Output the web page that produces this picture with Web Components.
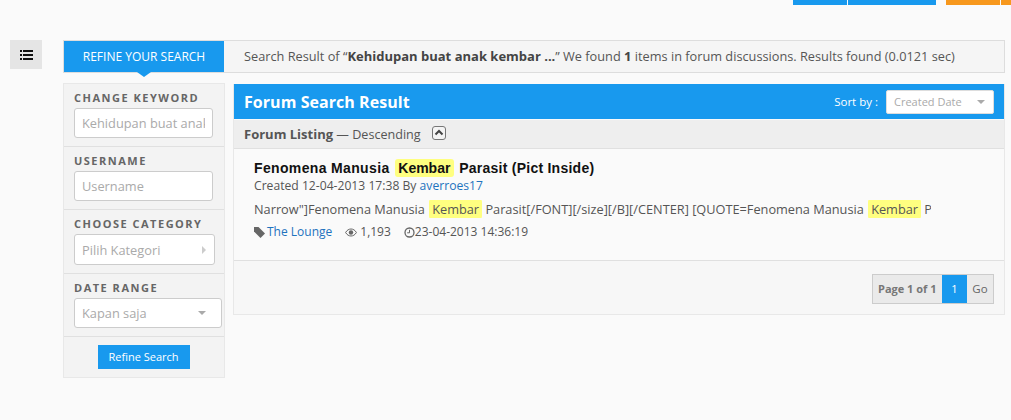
<!DOCTYPE html>
<html>
<head>
<meta charset="utf-8">
<style>
  html, body { margin: 0; padding: 0; }
  body { background: #fafafa; font-family: "Open Sans", sans-serif; color: #555; height: 420px; overflow: hidden; }
</style>
</head>
<body>
<top-tabs></top-tabs>
<search-page>
  <search-summary></search-summary>
  <filter-panel slot="side">
    <filter-field label="CHANGE KEYWORD" value="Kehidupan buat anak kembar" kind="text" w="139"></filter-field>
    <filter-field label="USERNAME" value="Username" kind="text" w="139"></filter-field>
    <filter-field label="CHOOSE CATEGORY" value="Pilih Kategori" kind="right" w="141" tall></filter-field>
    <filter-field label="DATE RANGE" value="Kapan saja" kind="down" w="148"></filter-field>
  </filter-panel>
  <result-panel slot="main">
    <result-item></result-item>
  </result-panel>
</search-page>

<script>
class TopTabs extends HTMLElement {
  constructor() {
    super();
    this.attachShadow({mode: "open"}).innerHTML = `
    <style>
      :host { display: flex; height: 5px; padding-left: 793px; }
      i { display: block; height: 5px; margin-right: 1px; background: #1899ee; }
      .o { background: #f7981d; }
    </style>
    <i style="width:54px"></i><i style="width:88px;margin-right:10px"></i><i class="o" style="width:54px"></i><i class="o" style="width:10px;margin:0"></i>`;
  }
}
customElements.define("top-tabs", TopTabs);

class SearchPage extends HTMLElement {
  constructor() {
    super();
    this.attachShadow({mode: "open"}).innerHTML = `
    <style>
      :host { display: flex; padding: 35px 6px 0 10px; }
      .toggle { width: 32px; height: 29px; background: #e5e5e5; display: flex; align-items: center; justify-content: center; margin-right: 21px; }
      .wrap { width: 942px; }
      .cols { display: flex; margin-top: 10px; align-items: flex-start; }
      ::slotted([slot=side]) { margin-right: 8px; }
    </style>
    <div class="toggle">
      <svg width="13" height="10" viewBox="0 0 13 10">
        <path fill="#111" d="M0 0h2v2H0zM0 4h2v2H0zM0 8h2v2H0zM3 0h10v2H3zM3 4h10v2H3zM3 8h10v2H3z"/>
      </svg>
    </div>
    <div class="wrap">
      <slot></slot>
      <div class="cols"><slot name="side"></slot><slot name="main"></slot></div>
    </div>`;
  }
}
customElements.define("search-page", SearchPage);

class SearchSummary extends HTMLElement {
  constructor() {
    super();
    this.attachShadow({mode: "open"}).innerHTML = `
    <style>
      :host { display: flex; height: 33px; box-sizing: border-box; border: 1px solid #ddd; background: #f5f5f5; font-size: 12.750px; color: #555; align-items: stretch; }
      .tab { position: relative; width: 160px; background: #1899ee; color: #fff; font-size: 12px; display: flex; align-items: center; justify-content: center; }
      .tab:after { content: ""; position: absolute; left: 73px; bottom: -5px; border: 7px solid transparent; border-bottom: 0; border-top: 5px solid #1899ee; }
      .msg { padding-left: 20px; line-height: 30px; white-space: nowrap; }
      b { color: #444; font-size: 13px; }
    </style>
    <div class="tab">REFINE YOUR SEARCH</div>
    <div class="msg">Search Result of “<b>Kehidupan buat anak kembar ...</b>” We found <b>1</b> items in forum discussions. Results found (0.0121 sec)</div>`;
  }
}
customElements.define("search-summary", SearchSummary);

class FilterPanel extends HTMLElement {
  constructor() {
    super();
    this.attachShadow({mode: "open"}).innerHTML = `
    <style>
      :host { display: block; width: 162px; box-sizing: border-box; border: 1px solid #e8e8e8; background: #f3f3f3; }
      .foot { display: flex; justify-content: center; padding: 8px 0 8px; }
      button { width: 92px; height: 24px; padding: 0 0 2px; border: 0; background: #1899ee; color: #fff; font: 11px "Open Sans", sans-serif; margin-right: 1px; }
    </style>
    <slot></slot>
    <div class="foot"><button>Refine Search</button></div>`;
  }
}
customElements.define("filter-panel", FilterPanel);

class FilterField extends HTMLElement {
  connectedCallback() {
    const kind = this.getAttribute("kind");
    const tall = this.hasAttribute("tall") ? 1 : 0;
    let arrow = "";
    if (kind == "right") arrow = `<span class="ar r"></span>`;
    if (kind == "down") arrow = `<span class="ar d"></span>`;
    this.attachShadow({mode: "open"}).innerHTML = `
    <style>
      :host { display: block; box-sizing: border-box; height: ${63 + tall}px; padding: 6px 0 0 10px; border-bottom: 1px solid #e0e0e0; }
      label { display: block; font-size: 11px; font-weight: 700; letter-spacing: 1.500px; color: #666; line-height: 15px; margin-bottom: 3px; white-space: nowrap; }
      .box { box-sizing: border-box; height: ${30 + tall}px; width: ${this.getAttribute("w")}px; background: #fff; border: 1px solid #ccc; border-radius: 3px; display: flex; align-items: center; justify-content: space-between; padding: 0 7px; font-size: 12.800px; color: #aaa; white-space: nowrap; }
      .box span:first-child { flex: 1; min-width: 0; overflow: hidden; line-height: 20px; }
      .ar { flex: none; width: 0; height: 0; }
      .r { border: 4px solid transparent; border-right: 0; border-left: 4px solid #ccc; margin-right: 1px; }
      .d { border: 4px solid transparent; border-bottom: 0; border-top: 4px solid #aaa; border-left-width: 4px; margin-right: 8px; }
    </style>
    <label>${this.getAttribute("label")}</label>
    <div class="box"><span>${this.getAttribute("value")}</span>${arrow}</div>`;
  }
}
customElements.define("filter-field", FilterField);

class ResultPanel extends HTMLElement {
  constructor() {
    super();
    this.attachShadow({mode: "open"}).innerHTML = `
    <style>
      :host { display: block; width: 772px; box-sizing: border-box; margin-top: 1px; border: 1px solid #e8e8e8; border-top: 0; background: #fafafa; }
      header { height: 35px; background: #1899ee; color: #fff; display: flex; align-items: center; justify-content: space-between; padding: 0 10px; }
      h2 { margin: 0; font-size: 16px; font-weight: 700; letter-spacing: .05px; }
      .sort { display: flex; align-items: center; font-size: 11.500px; }
      .sel { box-sizing: border-box; width: 108px; height: 24px; margin-left: 8px; background: #fff; border: 1px solid #ddd; border-radius: 2px; color: #aaa; font-size: 11px; display: flex; align-items: center; justify-content: space-between; padding: 0 7px; }
      .sel i { border: 4px solid transparent; border-bottom: 0; border-top: 4px solid #aaa; margin-right: 1px; }
      .bar { height: 29px; box-sizing: border-box; margin-top: 1px; background: #eee; border-bottom: 1px solid #e0e0e0; padding-left: 10px; display: flex; align-items: center; font-size: 13px; color: #555; }
      .bar span { font-size: 12.600px; }
      .bar svg { margin-left: 11px; margin-top: -2px; }
      .pages { display: flex; justify-content: flex-end; height: 54px; padding: 13px 10px 0 0; box-sizing: border-box; border-top: 1px solid #e0e0e0; background: #f7f7f7; }
      .pager { box-sizing: border-box; display: flex; height: 30px; border: 1px solid #ccc; background: #eaeaea; font-size: 11px; color: #777; align-items: stretch; line-height: 28px; }
      .pager b { padding: 0 5px 0 5px; width: 59px; }
      .pager .cur { width: 25px; background: #1899ee; color: #fff; text-align: center; }
      .pager .go { width: 26px; text-align: center; font-size: 11.500px; color: #666; }
    </style>
    <header>
      <h2>Forum Search Result</h2>
      <div class="sort">Sort by :<div class="sel"><span>Created Date</span><i></i></div></div>
    </header>
    <div class="bar"><b>Forum Listing</b><span>&nbsp;— Descending</span>
      <svg width="14" height="14" viewBox="0 0 14 14"><rect x=".5" y=".5" width="13" height="13" rx="2.500" fill="#f4f4f4" stroke="#777"/><path d="M3.500 8.500L7 5l3.500 3.500" fill="none" stroke="#444" stroke-width="2"/></svg>
    </div>
    <slot></slot>
    <div class="pages"><div class="pager"><b>Page 1 of 1</b><span class="cur">1</span><span class="go">Go</span></div></div>`;
  }
}
customElements.define("result-panel", ResultPanel);

class ResultItem extends HTMLElement {
  constructor() {
    super();
    this.attachShadow({mode: "open"}).innerHTML = `
    <style>
      :host { display: block; box-sizing: border-box; height: 111px; padding: 10px 0 0 20px; font-size: 12px; color: #555; }
      h3 { margin: 0; font: 700 14px/18px "Liberation Sans", Arial, sans-serif; color: #111; letter-spacing: .35px; white-space: nowrap; }
      h3 span { letter-spacing: .25px; }
      mark { background: #ffff80; color: inherit; padding: 1px 3px; border-radius: 3px; margin: 0 1px; }
      h3 mark { color: #111; letter-spacing: 0; padding: 1px 3.500px; }
      a { color: #1e73be; text-decoration: none; }
      .by { line-height: 16px; margin-top: 1px; font-size: 12.150px; }
      .txt { width: 677px; overflow: hidden; white-space: nowrap; margin-top: 6px; line-height: 18px; font-size: 12.750px; }
      .txt mark { margin-right: 0; }
      .meta { display: flex; align-items: center; margin-top: 5px; line-height: 18px; }
      .meta svg { flex: none; }
      .views { margin-left: 13px; display: flex; align-items: center; gap: 3px; }
      .date { margin-left: 13px; display: flex; align-items: center; gap: 0; }
    </style>
    <h3>Fenomena Manusia <mark>Kembar</mark> <span>Parasit (Pict Inside)</span></h3>
    <div class="by">Created 12-04-2013 17:38 By <a>averroes17</a></div>
    <div class="txt">Narrow"]Fenomena Manusia <mark>Kembar</mark> Parasit[/FONT][/size][/B][/CENTER] [QUOTE=Fenomena Manusia <mark>Kembar</mark> Parasit</div>
    <div class="meta">
      <svg width="11" height="11" viewBox="0 0 11 11" style="margin-right:2px"><path fill="#666" d="M0 0h4.500L11 6.500 6.500 11 0 4.500z"/></svg>
      <a>The Lounge</a>
      <span class="views"><svg width="12" height="9" viewBox="0 0 12 9"><path fill="none" stroke="#666" d="M.6 4.500C2 2 4 1 6 1s4 1 5.400 3.500C10 7 8 8 6 8S2 7 .6 4.500z"/><circle cx="6" cy="4.500" r="2.200" fill="#666"/></svg>1,193</span>
      <span class="date"><svg width="11" height="11" viewBox="0 0 11 11"><circle cx="5.500" cy="5.500" r="4.500" fill="none" stroke="#666" stroke-width="1.300"/><path d="M5.500 2.800v3h-2.300" fill="none" stroke="#666"/></svg>23-04-2013 14:36:19</span>
    </div>`;
  }
}
customElements.define("result-item", ResultItem);
</script>
</body>
</html>
